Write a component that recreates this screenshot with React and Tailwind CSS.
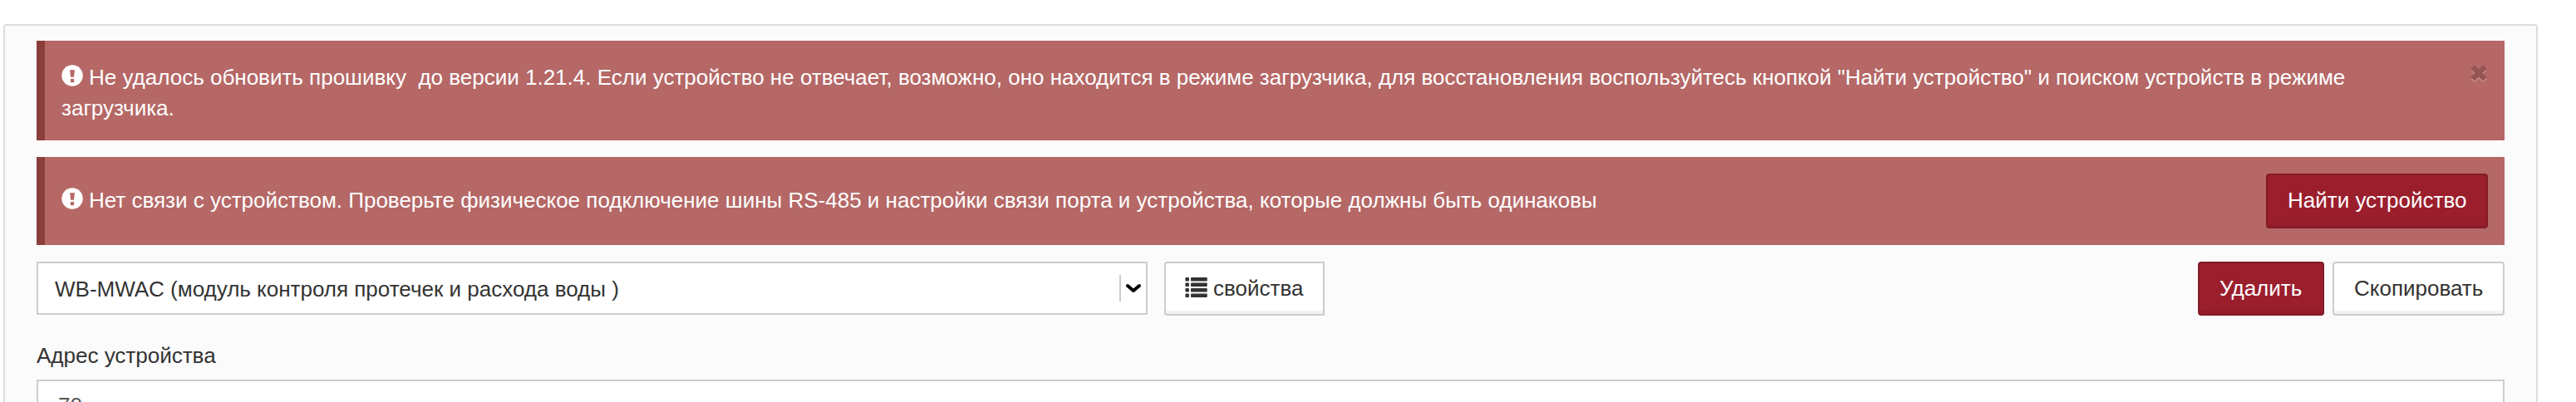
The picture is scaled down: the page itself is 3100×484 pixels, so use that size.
import React from 'react';

const ExclamationIcon = ({ className }) => (
  <svg viewBox="0 0 26 26" className={className}>
    <circle cx="13" cy="13" r="12.7" fill="#fff" />
    <path d="M10 6.2h6l-1.1 8.6h-3.8z" fill="#b56866" />
    <rect x="10.9" y="17" width="4.2" height="4.2" fill="#b56866" />
  </svg>
);

const ListIcon = () => (
  <svg viewBox="0 0 27 24" className="w-[27px] h-6 shrink-0" fill="#333">
    {[0, 6.5, 13, 19.5].map((y) => (
      <g key={y}>
        <rect x="0.4" y={y} width="4.6" height="4.5" rx="1" />
        <rect x="7" y={y} width="19.8" height="4.5" rx="1" />
      </g>
    ))}
  </svg>
);

const RemoveIcon = () => (
  <svg viewBox="0 0 20 22" className="w-5 h-[22px]" strokeWidth="6.4">
    <path d="M2.7 4.7l14.6 14.6M17.3 4.7L2.7 19.3" stroke="#c98f8d" />
    <path d="M2.7 2.7l14.6 14.6M17.3 2.7L2.7 17.3" stroke="#935452" />
  </svg>
);

const Button = ({ danger, className = '', children }) => (
  <button
    className={`flex items-start border-2 px-6 pt-3 leading-[37px] whitespace-nowrap shrink-0 ${
      danger
        ? 'border-[#821a28] bg-[#9b1e2d] text-white shadow-[inset_0_-4px_0_rgba(0,0,0,0.05)]'
        : 'border-[#ccc] bg-white text-[#333] shadow-[inset_0_-4px_0_rgba(0,0,0,0.05)]'
    } ${className}`}
  >
    {children}
  </button>
);

const App = () => {
  return (
    <div className="h-[484px] overflow-hidden bg-white pt-[29px] pl-1 pr-[46px] font-['Liberation_Sans',Arial,sans-serif] text-[26px] leading-[37px] text-[#333]">
      <div className="h-[600px] border-2 border-[#dcdedd] rounded bg-[#fbfbfb] px-[38px] pt-[18px]">
        <div className="flex items-start justify-between h-[120px] border-l-[10px] border-[#8a3f3b] bg-[#b56866] pl-5 pr-[21px] pt-[26px] text-white">
          <p className="w-[2800px] whitespace-pre-wrap">
            <ExclamationIcon className="inline-block size-[26px] mr-[7px] align-[-2px]" />
            {'Не удалось обновить прошивку  до версии 1.21.4. Если устройство не отвечает, возможно, оно находится в режиме загрузчика, для восстановления воспользуйтесь кнопкой "Найти устройство" и поиском устройств в режиме загрузчика.'}
          </p>
          <button className="mt-[3px]">
            <RemoveIcon />
          </button>
        </div>

        <div className="flex items-start justify-between mt-5 h-[106px] border-l-[10px] border-[#8a3f3b] bg-[#b56866] p-5 text-white">
          <p className="pt-3.5 whitespace-pre-wrap">
            <ExclamationIcon className="inline-block size-[26px] mr-[7px] align-[-2px]" />
            Нет связи с устройством. Проверьте физическое подключение шины RS-485 и настройки связи порта и устройства, которые должны быть одинаковы
          </p>
          <Button danger className="w-[267px] h-[66px] rounded">Найти устройство</Button>
        </div>

        <div className="flex items-start mt-5">
          <div className="flex items-center w-[1337px] h-16 border-2 border-[#ccc] bg-white pl-5 pr-[6px]">
            <span className="grow self-start pt-[13px]">WB-MWAC (модуль контроля протечек и расхода воды )</span>
            <span className="w-0.5 h-8 bg-[#ccc] mr-[6px]" />
            <svg viewBox="0 0 18 12" className="w-[18px] h-3" fill="none" stroke="#000" strokeWidth="4" strokeLinecap="round" strokeLinejoin="round">
              <path d="M2 3l7 6 7-6" />
            </svg>
          </div>
          <Button className="ml-5 w-[193px] h-[65px] rounded-l pl-[23px]">
            <span className="flex pt-[5px] mr-[7px]">
              <ListIcon />
            </span>
            свойства
          </Button>
          <div className="flex gap-2.5 ml-auto">
            <Button danger className="w-[152px] h-[65px] rounded">Удалить</Button>
            <Button className="w-[207px] h-[65px] rounded">Скопировать</Button>
          </div>
        </div>

        <label className="block mt-[30px] mb-2.5">Адрес устройства</label>
        <div className="h-16 border-2 border-[#ccc] bg-white px-6 pt-[11px] text-[#555]">70</div>
      </div>
    </div>
  );
};

export default App;
